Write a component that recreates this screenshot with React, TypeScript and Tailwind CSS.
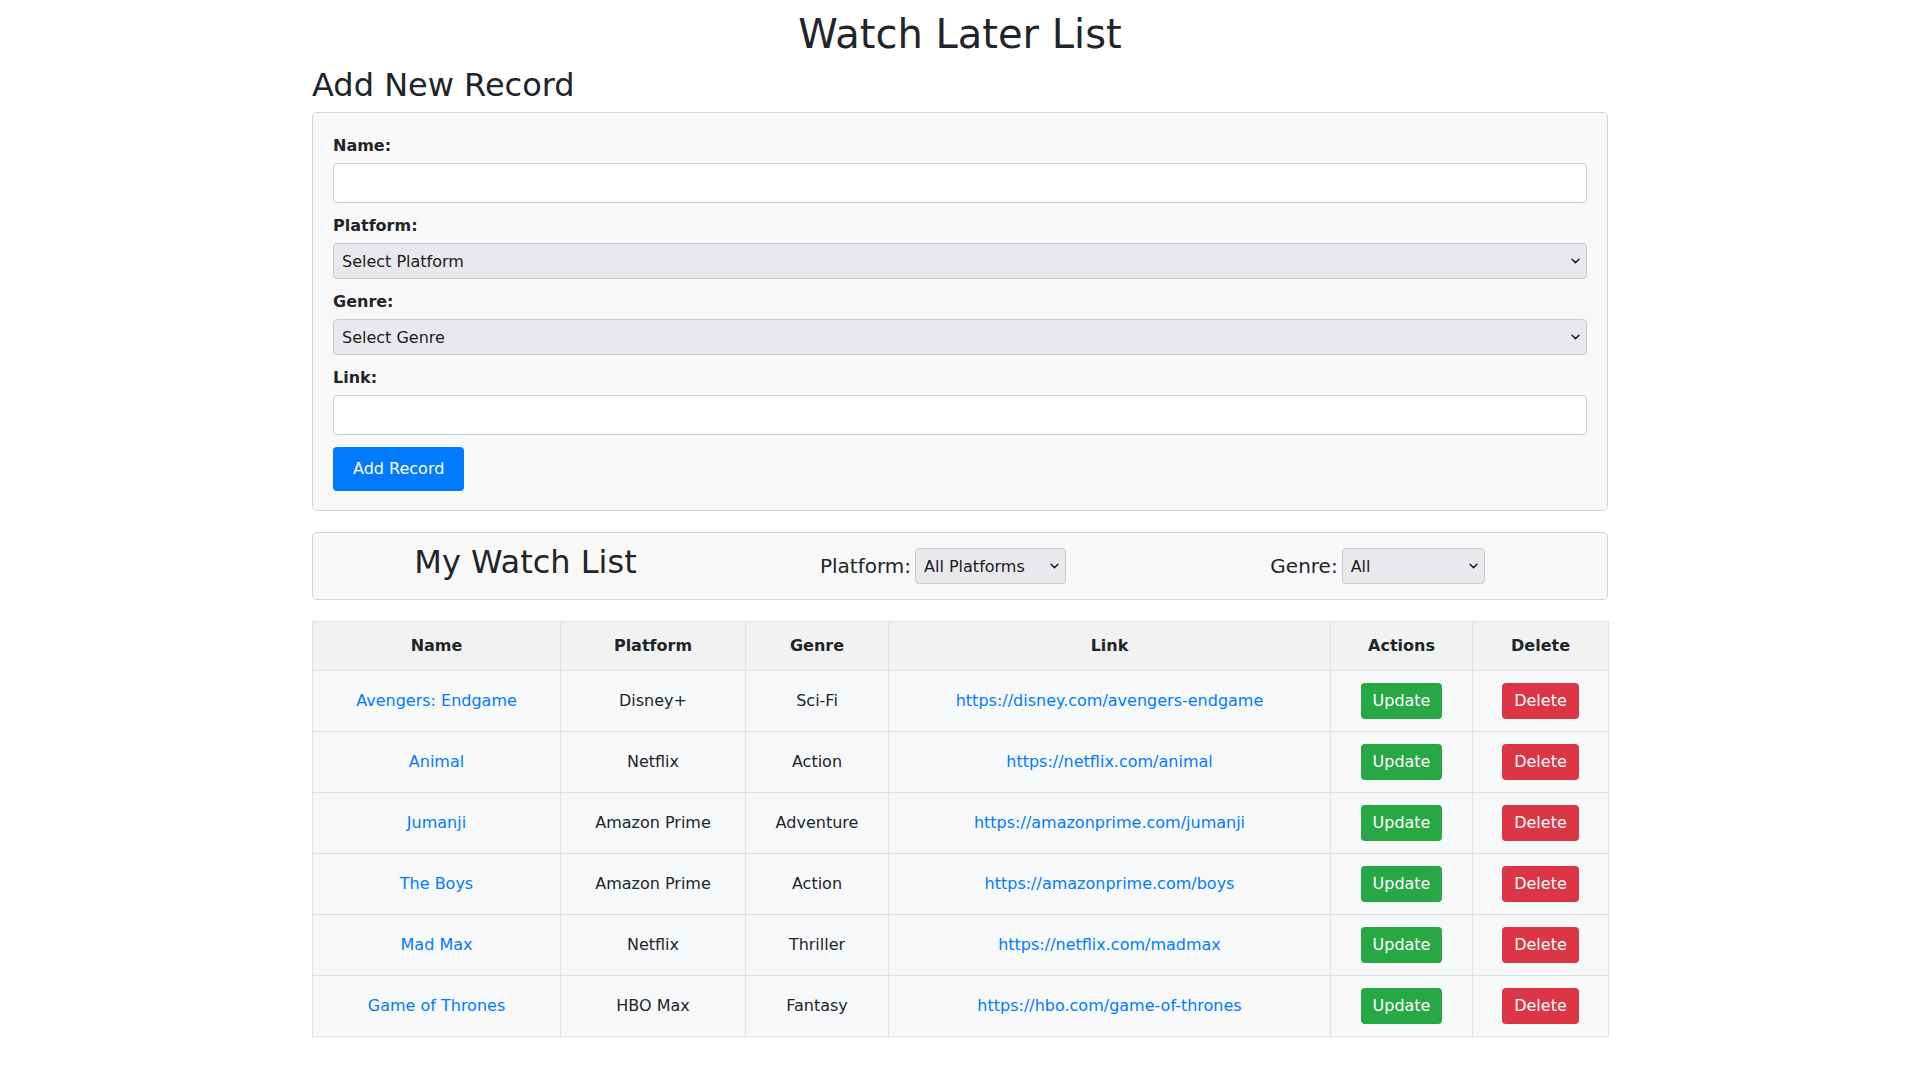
import React from "react";

const records = [
  { name: "Avengers: Endgame", platform: "Disney+", genre: "Sci-Fi", link: "https://disney.com/avengers-endgame" },
  { name: "Animal", platform: "Netflix", genre: "Action", link: "https://netflix.com/animal" },
  { name: "Jumanji", platform: "Amazon Prime", genre: "Adventure", link: "https://amazonprime.com/jumanji" },
  { name: "The Boys", platform: "Amazon Prime", genre: "Action", link: "https://amazonprime.com/boys" },
  { name: "Mad Max", platform: "Netflix", genre: "Thriller", link: "https://netflix.com/madmax" },
  { name: "Game of Thrones", platform: "HBO Max", genre: "Fantasy", link: "https://hbo.com/game-of-thrones" },
];

function Chevron() {
  return (
    <svg
      className="pointer-events-none absolute right-[7px] top-1/2 -translate-y-1/2"
      width="9"
      height="6"
      viewBox="0 0 9 6"
      fill="none"
    >
      <path d="M1 1.2 L4.5 4.6 L8 1.2" stroke="#1f1f1f" strokeWidth="1.5" strokeLinecap="round" strokeLinejoin="round" />
    </svg>
  );
}

function Select({ value, className }: { value: string; className: string }) {
  return (
    <div className={"relative " + className}>
      <select
        defaultValue={value}
        className="block h-[36px] w-full appearance-none rounded-[4px] border border-[#c9c9ce] bg-[#e9e9ed] pl-[8px] pr-6 pt-[1px] text-[16px] leading-[24px] text-[#1b1b1b] outline-none"
      >
        <option>{value}</option>
      </select>
      <Chevron />
    </div>
  );
}

function Field({ label, children, last }: { label: string; children: React.ReactNode; last?: boolean }) {
  return (
    <div className={last ? "mb-[12px]" : "mb-[11px]"}>
      <label className="mb-[5px] block text-[16px] font-bold leading-[24px] text-[#212529]">{label}</label>
      {children}
    </div>
  );
}

export default function App() {
  return (
    <div className="min-h-screen bg-white font-['DejaVu_Sans',sans-serif] text-[#212529]">
      <div className="mx-auto w-[1296px]">
        <h1 className="mb-2 pt-[10px] text-center text-[40px] font-normal leading-[48px]">Watch Later List</h1>
        <h2 className="mb-2 text-[32px] font-normal leading-[38px]">Add New Record</h2>

        <div className="rounded-[5px] border border-[#d6d6d6] bg-[#f8f8f8] px-5 pb-[19px] pt-[21px]">
          <Field label="Name:">
            <input className="block h-[40px] w-full rounded-[4px] border border-[#cfcfcf] bg-white px-3 text-[16px] outline-none" />
          </Field>
          <Field label="Platform:">
            <Select value="Select Platform" className="w-full" />
          </Field>
          <Field label="Genre:">
            <Select value="Select Genre" className="w-full" />
          </Field>
          <Field label="Link:" last>
            <input className="block h-[40px] w-full rounded-[4px] border border-[#cfcfcf] bg-white px-3 text-[16px] outline-none" />
          </Field>
          <button className="h-[44px] rounded-[4px] bg-[#007bff] px-5 text-[16px] leading-[24px] text-white">Add Record</button>
        </div>

        <div className="mt-[21px] grid grid-cols-3 items-center rounded-[5px] border border-[#d6d6d6] bg-[#f8f8f8] px-2 py-[10px]">
          <div className="flex justify-center pr-[17px]">
            <h2 className="mb-2 text-[32px] font-normal leading-[38px]">My Watch List</h2>
          </div>
          <div className="flex items-center justify-center gap-1 pr-[34px]">
            <span className="text-[20px] leading-[30px]">Platform:</span>
            <Select value="All Platforms" className="w-[151px]" />
          </div>
          <div className="flex items-center justify-center gap-1 pr-[17px]">
            <span className="text-[20px] leading-[30px]">Genre:</span>
            <Select value="All" className="w-[143px]" />
          </div>
        </div>

        <table className="mt-[21px] w-full table-fixed border-collapse border border-[#dee2e6] text-[16px] leading-[24px]">
          <colgroup>
            <col className="w-[248px]" />
            <col className="w-[185px]" />
            <col className="w-[143px]" />
            <col className="w-[442px]" />
            <col className="w-[142px]" />
            <col className="w-[136px]" />
          </colgroup>
          <thead>
            <tr className="bg-[#f2f2f2]">
              {["Name", "Platform", "Genre", "Link", "Actions", "Delete"].map((h) => (
                <th key={h} className="border border-[#dee2e6] px-3 py-3 text-center font-bold">
                  {h}
                </th>
              ))}
            </tr>
          </thead>
          <tbody>
            {records.map((r) => (
              <tr key={r.name} className="bg-[#f7f8fa]">
                <td className="border border-[#dee2e6] px-3 py-3 text-center">
                  <a className="text-[#007bff]" href="#">{r.name}</a>
                </td>
                <td className="border border-[#dee2e6] px-3 py-3 text-center">{r.platform}</td>
                <td className="border border-[#dee2e6] px-3 py-3 text-center">{r.genre}</td>
                <td className="border border-[#dee2e6] px-3 py-3 text-center">
                  <a className="text-[#007bff]" href="#">{r.link}</a>
                </td>
                <td className="border border-[#dee2e6] px-3 py-3 text-center">
                  <button className="h-[36px] rounded-[4px] bg-[#28a745] px-3 text-[16px] leading-[24px] text-white">Update</button>
                </td>
                <td className="border border-[#dee2e6] px-3 py-3 text-center">
                  <button className="h-[36px] rounded-[4px] bg-[#dc3545] px-3 text-[16px] leading-[24px] text-white">Delete</button>
                </td>
              </tr>
            ))}
          </tbody>
        </table>
      </div>
    </div>
  );
}
